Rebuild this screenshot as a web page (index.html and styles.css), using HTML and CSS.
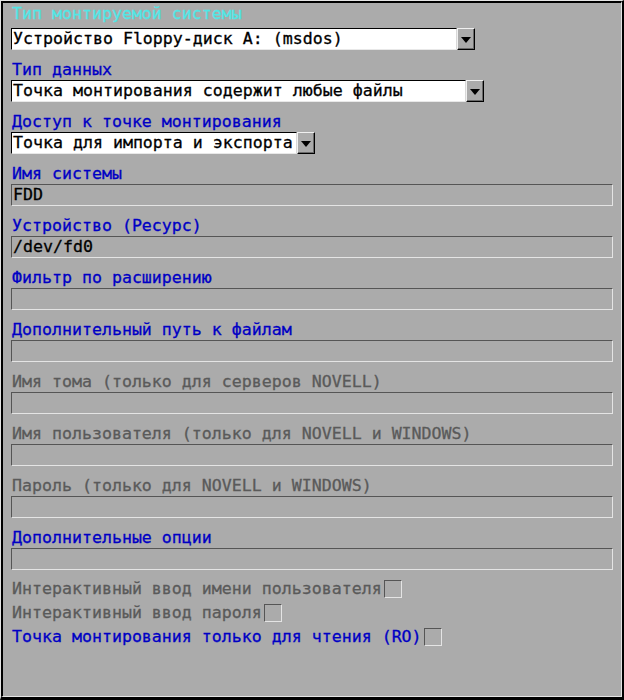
FILE: index.html
```html
<!DOCTYPE html>
<html>
<head>
<meta charset="utf-8">
<link rel="stylesheet" href="styles.css">
</head>
<body>
<div class="window">
  <div class="frame">
    <div class="field">
      <div class="label label-active">Тип монтируемой системы</div>
      <div class="select">
        <div class="select-value w1">Устройство Floppy-диск A: (msdos)</div>
        <div class="select-btn"><span class="arrow"></span></div>
      </div>
    </div>
    <div class="field">
      <div class="label">Тип данных</div>
      <div class="select">
        <div class="select-value w2">Точка монтирования содержит любые файлы</div>
        <div class="select-btn"><span class="arrow"></span></div>
      </div>
    </div>
    <div class="field">
      <div class="label">Доступ к точке монтирования</div>
      <div class="select">
        <div class="select-value w3">Точка для импорта и экспорта</div>
        <div class="select-btn"><span class="arrow"></span></div>
      </div>
    </div>
    <div class="field">
      <div class="label">Имя системы</div>
      <div class="input">FDD</div>
    </div>
    <div class="field">
      <div class="label">Устройство (Ресурс)</div>
      <div class="input">/dev/fd0</div>
    </div>
    <div class="field">
      <div class="label">Фильтр по расширению</div>
      <div class="input"></div>
    </div>
    <div class="field">
      <div class="label">Дополнительный путь к файлам</div>
      <div class="input"></div>
    </div>
    <div class="field">
      <div class="label label-disabled">Имя тома (только для серверов NOVELL)</div>
      <div class="input"></div>
    </div>
    <div class="field">
      <div class="label label-disabled">Имя пользователя (только для NOVELL и WINDOWS)</div>
      <div class="input"></div>
    </div>
    <div class="field">
      <div class="label label-disabled">Пароль (только для NOVELL и WINDOWS)</div>
      <div class="input"></div>
    </div>
    <div class="field">
      <div class="label">Дополнительные опции</div>
      <div class="input"></div>
    </div>
    <div class="checks">
      <div class="check-row">
        <span class="label label-disabled">Интерактивный ввод имени пользователя</span>
        <span class="checkbox"></span>
      </div>
      <div class="check-row">
        <span class="label label-disabled">Интерактивный ввод пароля</span>
        <span class="checkbox"></span>
      </div>
      <div class="check-row">
        <span class="label">Точка монтирования только для чтения (RO)</span>
        <span class="checkbox"></span>
      </div>
    </div>
  </div>
</div>
</body>
</html>
```

FILE: styles.css
```css
html, body {
  margin: 0;
  padding: 0;
  background: #ababab;
}

body {
  font-family: "DejaVu Sans Mono", "Liberation Mono", monospace;
  font-size: 16.6px;
  color: #000;
  -webkit-text-stroke: 0.3px currentColor;
}

.window {
  width: 624px;
  height: 700px;
  box-sizing: border-box;
  border-style: solid;
  border-width: 1px 2px 3px 1px;
  border-color: #e4e4e4 #000 #000 #e4e4e4;
}

.frame {
  height: 100%;
  box-sizing: border-box;
  border-style: solid;
  border-width: 2px 1px 1px 2px;
  border-color: #000 #e4e4e4 #e4e4e4 #000;
  background: #ababab;
  padding: 0 8px 0 8px;
}

.field {
  margin-bottom: 9px;
}

.field:first-child .label {
  margin-bottom: 4px;
}

.label {
  display: block;
  height: 21px;
  line-height: 21px;
  padding-left: 1px;
  color: #0000c4;
  white-space: pre;
}

.label-active {
  color: #52e6e6;
}

.label-disabled {
  color: #5a5a5a;
}

.select {
  display: flex;
  height: 22px;
}

.select-value {
  box-sizing: border-box;
  height: 22px;
  line-height: 20px;
  padding-left: 1px;
  background: #fff;
  border-style: solid;
  border-width: 1px;
  border-color: #000 #d8d8d8 #e8e8e8 #000;
  white-space: pre;
  overflow: hidden;
}

.w1 { width: 446px; }
.w2 { width: 455px; }
.w3 { width: 286px; }

.select-btn {
  box-sizing: border-box;
  width: 18px;
  height: 22px;
  border-style: solid;
  border-width: 1px;
  border-color: #f0f0f0 #000 #000 #f0f0f0;
  box-shadow: inset -1px -1px 0 #6a6a6a;
  background: #ababab;
  display: flex;
  align-items: center;
  justify-content: center;
}

.arrow {
  width: 0;
  height: 0;
  border-left: 5px solid transparent;
  border-right: 5px solid transparent;
  border-top: 6px solid #000;
  margin-top: 1px;
}

.input {
  box-sizing: border-box;
  height: 22px;
  line-height: 20px;
  padding-left: 1px;
  border-style: solid;
  border-width: 1px;
  border-color: #555 #e4e4e4 #e4e4e4 #555;
  white-space: pre;
}

.checks {
  margin-top: -2px;
}

.check-row {
  display: flex;
  align-items: center;
  height: 24px;
}

.check-row .label {
  height: 24px;
  line-height: 24px;
}

.checkbox {
  box-sizing: border-box;
  width: 18px;
  height: 18px;
  margin-left: 2px;
  border-style: solid;
  border-width: 1px;
  border-color: #555 #e4e4e4 #e4e4e4 #555;
}
```
